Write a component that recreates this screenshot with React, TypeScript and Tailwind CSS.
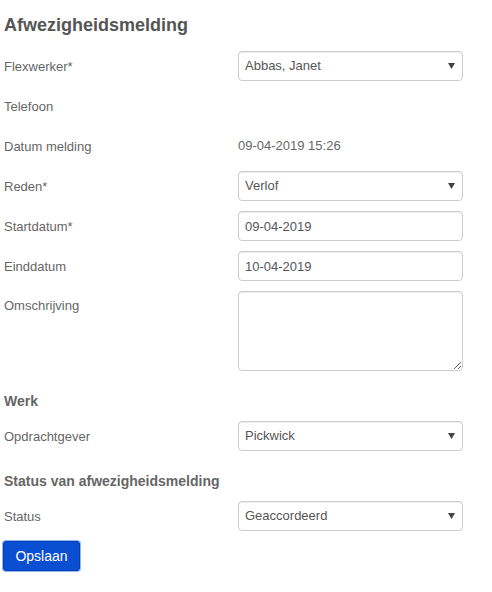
import React from "react"

const labelClass = "text-[13px] leading-[15px] text-[#666]"
const fieldClass =
  "h-[30px] w-[225px] rounded-[4px] border border-[#ccc] bg-white px-[6px] text-[13px] text-[#555] shadow-[inset_0_1px_1px_rgba(0,0,0,0.075)] focus:outline-none"

function Row({ label, children }: { label: string; children?: React.ReactNode }) {
  return (
    <div className="flex h-[30px] items-center">
      <div className={`w-[234px] ${labelClass}`}>{label}</div>
      {children}
    </div>
  )
}

function Select({ value }: { value: string }) {
  return (
    <div className="relative">
      <select defaultValue={value} className={`${fieldClass} appearance-none`}>
        <option>{value}</option>
      </select>
      <svg className="pointer-events-none absolute right-[8px] top-[12px]" width="7" height="6" viewBox="0 0 7 6">
        <path d="M0 0H7L3.5 6Z" fill="#444" />
      </svg>
    </div>
  )
}

function Input({ value }: { value: string }) {
  return <input defaultValue={value} className={fieldClass} />
}

export default function App() {
  return (
    <div className="min-h-[592px] bg-white pl-[4px] font-['Liberation_Sans',Arial,sans-serif]">
      <h1 className="pt-[15px] text-[18px] leading-[20px] font-bold text-[#555]">Afwezigheidsmelding</h1>
      <form className="mt-[16px] flex flex-col gap-[10px]">
        <Row label="Flexwerker*"><Select value="Abbas, Janet" /></Row>
        <Row label="Telefoon" />
        <Row label="Datum melding">
          <span className="text-[13px] text-[#666]">09-04-2019 15:26</span>
        </Row>
        <Row label="Reden*"><Select value="Verlof" /></Row>
        <Row label="Startdatum*"><Input value="09-04-2019" /></Row>
        <Row label="Einddatum"><Input value="10-04-2019" /></Row>
        <div className="flex">
          <div className={`w-[234px] pt-[7px] ${labelClass}`}>Omschrijving</div>
          <textarea className="h-[80px] w-[225px] rounded-[4px] border border-[#ccc] bg-white px-[6px] py-[4px] text-[13px] text-[#555] shadow-[inset_0_1px_1px_rgba(0,0,0,0.075)] focus:outline-none" />
        </div>
        <h2 className="pt-[10px] text-[14px] leading-[20px] font-bold text-[#666]">Werk</h2>
        <Row label="Opdrachtgever"><Select value="Pickwick" /></Row>
        <h2 className="pt-[10px] text-[14px] leading-[20px] font-bold text-[#666]">Status van afwezigheidsmelding</h2>
        <Row label="Status"><Select value="Geaccordeerd" /></Row>
        <div>
          <button
            type="button"
            className="-ml-[1px] h-[30px] w-[77px] rounded-[3px] border border-[#0b3fb0] bg-[#0a4ed2] text-[14px] text-white shadow-[0_0_0_1px_#8dbcf2]"
          >
            Opslaan
          </button>
        </div>
      </form>
    </div>
  )
}
